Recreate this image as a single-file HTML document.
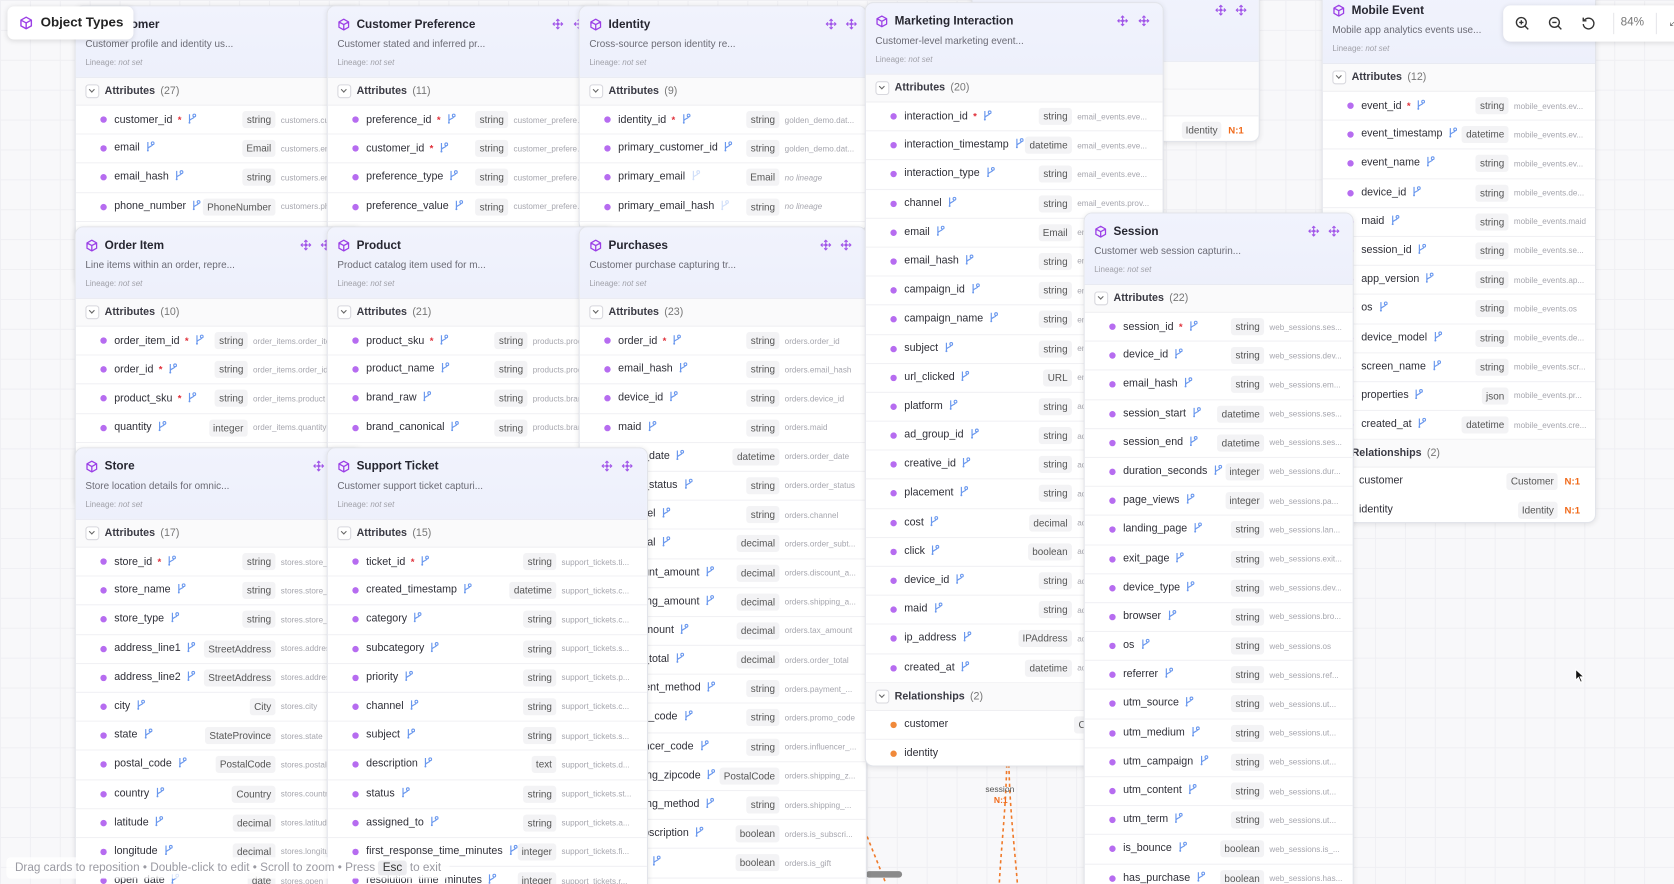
<!DOCTYPE html>
<html><head><meta charset="utf-8"><style>
html,body{margin:0;padding:0;width:1674px;height:884px;overflow:hidden;background:#f8f8fa;font-family:"Liberation Sans",sans-serif}
#w{position:absolute;left:0;top:0;width:1568px;height:828px;transform:scale(1.0676);transform-origin:0 0;overflow:hidden;
background-color:#f8f8fa;background-image:linear-gradient(#efeff3 1px,transparent 1px),linear-gradient(90deg,#efeff3 1px,transparent 1px);background-size:28px 28px}
.card{position:absolute;background:#fff;border:1px solid #e2e4ea;border-radius:8px;overflow:hidden;box-shadow:0 1px 5px rgba(0,0,0,.09)}
.hd{height:66px;background:linear-gradient(#f1f3fd,#edf0fb);position:relative;border-bottom:1px solid #e8eaf2}
.hd .ic{position:absolute;left:9px;top:11px;width:12px;height:12px}
.hd .t{position:absolute;left:27px;top:11px;font-size:11px;font-weight:bold;color:#262630}
.hd .d{position:absolute;left:9px;top:30px;font-size:9.3px;color:#6b6b75;white-space:nowrap}
.hd .l{position:absolute;left:9px;top:48px;font-size:7.5px;color:#a0a0a8}
.hd .mv{position:absolute;top:11px;width:11px;height:11px}
.ah{height:25px;background:#fafafb;border-bottom:1px solid #efeff2;position:relative;font-size:10px;font-weight:bold;color:#3a3a44;line-height:25px;padding-left:27px}
.ah span{font-weight:normal;color:#777;margin-left:5px}
.ah i{position:absolute;left:9px;top:6px;width:11px;height:11px;border:1px solid #d8d8de;border-radius:3px;background:#fff}
.ah i:after{content:"";position:absolute;left:3px;top:2px;width:3px;height:3px;border-right:1px solid #666;border-bottom:1px solid #666;transform:rotate(45deg)}
.r{height:27.2px;position:relative;border-bottom:1px solid #f1f1f4;box-sizing:border-box}
.dt{position:absolute;left:23px;top:10px;width:6px;height:6px;border-radius:50%;background:#b66cf0}
.o .dt{background:#f0893a}
.n{position:absolute;left:36px;top:0;line-height:26px;font-size:10px;color:#2f2f38;white-space:nowrap}
.n b{color:#e0303a;font-weight:bold;margin-left:5px;font-size:9px}
.k{width:9px;height:10px;margin-left:5px;vertical-align:-1px}
.rt{position:absolute;right:6px;top:0;height:26px;display:flex;align-items:center}
.rt em{font-style:normal;font-size:9.3px;color:#555;background:#f3f3f5;border-radius:3px;padding:3px 4px}
.rt small{display:block;width:70px;margin-left:5px;font-size:7.6px;color:#a6a6ae;white-space:nowrap;overflow:hidden;text-overflow:ellipsis}
.rt small.nl{font-style:italic}
.rt b{color:#f06a1a;font-size:9px;margin-left:6px;margin-right:8px}
.pf .rt{right:24px}
.oi .rt{right:22px}
.oi .rt small{width:80px}
.badge{position:absolute;left:7px;top:6px;width:118px;height:31px;background:#fff;border-radius:6px;box-shadow:0 1px 5px rgba(0,0,0,.12);z-index:50}
.zc{position:absolute;left:1408px;top:5px;width:170px;height:34px;background:#fff;border-radius:7px;box-shadow:0 1px 5px rgba(0,0,0,.12);z-index:50}
.hint{position:absolute;left:6px;top:803px;height:20px;padding:0 8px;line-height:20px;font-size:11px;color:#9a9aa2;background:rgba(255,255,255,.78);z-index:50;border-radius:4px}
.hint span{background:#ececef;color:#333;padding:1px 4px;border-radius:3px}
</style></head><body><div id="w">
<svg width="0" height="0" style="position:absolute">
<defs>
<symbol id="cube" viewBox="0 0 12 12"><path d="M6 1 L10.5 3.5 V8.5 L6 11 L1.5 8.5 V3.5 Z M1.5 3.5 L6 6 L10.5 3.5 M6 6 V11" fill="none" stroke="#9b3fe6" stroke-width="1.2" stroke-linejoin="round"/></symbol>
<symbol id="k" viewBox="0 0 9 10"><path d="M2.5 1 V9 M2.5 7.5 C2.5 5 7 5.5 7 3" fill="none" stroke="#6a98ee" stroke-width="1.1"/><circle cx="7" cy="2.2" r="1.3" fill="none" stroke="#6a98ee" stroke-width="1"/><circle cx="2.5" cy="9" r=".9" fill="#6a98ee"/></symbol>
<symbol id="mv" viewBox="0 0 11 11"><path d="M5.5 1 V10 M1 5.5 H10 M4 2.5 L5.5 1 L7 2.5 M4 8.5 L5.5 10 L7 8.5 M2.5 4 L1 5.5 L2.5 7 M8.5 4 L10 5.5 L8.5 7" fill="none" stroke="#a054e8" stroke-width="1"/><circle cx="5.5" cy="5.5" r="1.3" fill="#a054e8"/></symbol>
</defs></svg>

<svg style="position:absolute;left:0;top:0" width="1568" height="828">
<path d="M943 716 C942 760 938 790 936 828" stroke="#f07a2a" stroke-width="1.5" stroke-dasharray="3 3" fill="none"/>
<path d="M945 716 C946 760 950 790 953 828" stroke="#f07a2a" stroke-width="1.5" stroke-dasharray="3 3" fill="none"/>
<path d="M810 778 L830 828" stroke="#f07a2a" stroke-width="1.5" stroke-dasharray="3 3" fill="none"/>
<text x="923" y="742" font-size="8" fill="#555" font-family="Liberation Sans">session</text>
<text x="931" y="752" font-size="8" fill="#f06a1a" font-weight="bold" font-family="Liberation Sans">N:1</text>
<rect x="811" y="816" width="34" height="6" rx="3" fill="#8a8a8a"/>
</svg>

<!-- Customer -->
<div class="card" style="left:70px;top:5px;width:268px;height:260px">
<div class="hd"><svg class="ic"><use href="#cube"/></svg><div class="t">Customer</div><div class="d">Customer profile and identity us...</div><div class="l">Lineage: <i>not set</i></div></div>
<div class="ah"><i></i>Attributes<span>(27)</span></div>
<div class="r"><i class="dt"></i><span class="n">customer_id<b>*</b><svg class="k"><use href="#k"/></svg></span><span class="rt"><em>string</em><small>customers.customer_id</small></span></div>
<div class="r"><i class="dt"></i><span class="n">email<svg class="k"><use href="#k"/></svg></span><span class="rt"><em>Email</em><small>customers.email</small></span></div>
<div class="r"><i class="dt"></i><span class="n">email_hash<svg class="k"><use href="#k"/></svg></span><span class="rt"><em>string</em><small>customers.email_hash</small></span></div>
<div class="r"><i class="dt"></i><span class="n">phone_number<svg class="k"><use href="#k"/></svg></span><span class="rt"><em>PhoneNumber</em><small>customers.phone</small></span></div>
</div>

<!-- Customer Preference -->
<div class="card pf" style="left:306px;top:5px;width:268px;height:260px">
<div class="hd"><svg class="ic"><use href="#cube"/></svg><div class="t">Customer Preference</div><svg class="mv" style="left:210px"><use href="#mv"/></svg><svg class="mv" style="left:230px"><use href="#mv"/></svg><div class="d">Customer stated and inferred pr...</div><div class="l">Lineage: <i>not set</i></div></div>
<div class="ah"><i></i>Attributes<span>(11)</span></div>
<div class="r"><i class="dt"></i><span class="n">preference_id<b>*</b><svg class="k"><use href="#k"/></svg></span><span class="rt"><em>string</em><small>customer_preferences</small></span></div>
<div class="r"><i class="dt"></i><span class="n">customer_id<b>*</b><svg class="k"><use href="#k"/></svg></span><span class="rt"><em>string</em><small>customer_preferences</small></span></div>
<div class="r"><i class="dt"></i><span class="n">preference_type<svg class="k"><use href="#k"/></svg></span><span class="rt"><em>string</em><small>customer_preferences</small></span></div>
<div class="r"><i class="dt"></i><span class="n">preference_value<svg class="k"><use href="#k"/></svg></span><span class="rt"><em>string</em><small>customer_preferences</small></span></div>
</div>

<!-- Relationship card behind -->
<div class="card" style="left:910px;top:-10px;width:268px;height:141px">
<div class="hd"><svg class="mv" style="left:227px;top:13px"><use href="#mv"/></svg><svg class="mv" style="left:246px;top:13px"><use href="#mv"/></svg><div class="d" style="top:32px;left:120px">between an...</div></div>
<div class="ah"><i></i>Attributes<span>(0)</span></div>
<div class="ah" style="height:24px;line-height:24px">Relationships<span>(1)</span></div>
<div class="r o"><i class="dt"></i><span class="n">identity</span><span class="rt"><em>Identity</em><b>N:1</b></span></div>
</div>

<!-- Identity -->
<div class="card" style="left:542px;top:5px;width:268px;height:210px">
<div class="hd"><svg class="ic"><use href="#cube"/></svg><div class="t">Identity</div><svg class="mv" style="left:230px"><use href="#mv"/></svg><svg class="mv" style="left:249px"><use href="#mv"/></svg><div class="d">Cross-source person identity re...</div><div class="l">Lineage: <i>not set</i></div></div>
<div class="ah"><i></i>Attributes<span>(9)</span></div>
<div class="r"><i class="dt"></i><span class="n">identity_id<b>*</b><svg class="k"><use href="#k"/></svg></span><span class="rt"><em>string</em><small>golden_demo.dat...</small></span></div>
<div class="r"><i class="dt"></i><span class="n">primary_customer_id<svg class="k"><use href="#k"/></svg></span><span class="rt"><em>string</em><small>golden_demo.dat...</small></span></div>
<div class="r"><i class="dt"></i><span class="n">primary_email<svg class="k" style="opacity:.3"><use href="#k"/></svg></span><span class="rt"><em>Email</em><small class="nl">no lineage</small></span></div>
<div class="r"><i class="dt"></i><span class="n">primary_email_hash<svg class="k" style="opacity:.3"><use href="#k"/></svg></span><span class="rt"><em>string</em><small class="nl">no lineage</small></span></div>
</div>

<!-- Order Item -->
<div class="card oi" style="left:70px;top:212px;width:268px;height:260px">
<div class="hd"><svg class="ic"><use href="#cube"/></svg><div class="t">Order Item</div><svg class="mv" style="left:210px"><use href="#mv"/></svg><svg class="mv" style="left:229px"><use href="#mv"/></svg><div class="d">Line items within an order, repre...</div><div class="l">Lineage: <i>not set</i></div></div>
<div class="ah"><i></i>Attributes<span>(10)</span></div>
<div class="r"><i class="dt"></i><span class="n">order_item_id<b>*</b><svg class="k"><use href="#k"/></svg></span><span class="rt"><em>string</em><small>order_items.order_item_id</small></span></div>
<div class="r"><i class="dt"></i><span class="n">order_id<b>*</b><svg class="k"><use href="#k"/></svg></span><span class="rt"><em>string</em><small>order_items.order_id</small></span></div>
<div class="r"><i class="dt"></i><span class="n">product_sku<b>*</b><svg class="k"><use href="#k"/></svg></span><span class="rt"><em>string</em><small>order_items.product</small></span></div>
<div class="r"><i class="dt"></i><span class="n">quantity<svg class="k"><use href="#k"/></svg></span><span class="rt"><em>integer</em><small>order_items.quantity</small></span></div>
</div>

<!-- Product -->
<div class="card" style="left:306px;top:212px;width:268px;height:260px">
<div class="hd"><svg class="ic"><use href="#cube"/></svg><div class="t">Product</div><div class="d">Product catalog item used for m...</div><div class="l">Lineage: <i>not set</i></div></div>
<div class="ah"><i></i>Attributes<span>(21)</span></div>
<div class="r"><i class="dt"></i><span class="n">product_sku<b>*</b><svg class="k"><use href="#k"/></svg></span><span class="rt"><em>string</em><small>products.product_sku</small></span></div>
<div class="r"><i class="dt"></i><span class="n">product_name<svg class="k"><use href="#k"/></svg></span><span class="rt"><em>string</em><small>products.product_name</small></span></div>
<div class="r"><i class="dt"></i><span class="n">brand_raw<svg class="k"><use href="#k"/></svg></span><span class="rt"><em>string</em><small>products.brand_raw</small></span></div>
<div class="r"><i class="dt"></i><span class="n">brand_canonical<svg class="k"><use href="#k"/></svg></span><span class="rt"><em>string</em><small>products.brand</small></span></div>
</div>

<!-- Purchases -->
<div class="card" style="left:542px;top:212px;width:268px;height:640px">
<div class="hd"><svg class="ic"><use href="#cube"/></svg><div class="t">Purchases</div><svg class="mv" style="left:225px"><use href="#mv"/></svg><svg class="mv" style="left:244px"><use href="#mv"/></svg><div class="d">Customer purchase capturing tr...</div><div class="l">Lineage: <i>not set</i></div></div>
<div class="ah"><i></i>Attributes<span>(23)</span></div>
<div class="r"><i class="dt"></i><span class="n">order_id<b>*</b><svg class="k"><use href="#k"/></svg></span><span class="rt"><em>string</em><small>orders.order_id</small></span></div>
<div class="r"><i class="dt"></i><span class="n">email_hash<svg class="k"><use href="#k"/></svg></span><span class="rt"><em>string</em><small>orders.email_hash</small></span></div>
<div class="r"><i class="dt"></i><span class="n">device_id<svg class="k"><use href="#k"/></svg></span><span class="rt"><em>string</em><small>orders.device_id</small></span></div>
<div class="r"><i class="dt"></i><span class="n">maid<svg class="k"><use href="#k"/></svg></span><span class="rt"><em>string</em><small>orders.maid</small></span></div>
<div class="r"><i class="dt"></i><span class="n">order_date<svg class="k"><use href="#k"/></svg></span><span class="rt"><em>datetime</em><small>orders.order_date</small></span></div>
<div class="r"><i class="dt"></i><span class="n">order_status<svg class="k"><use href="#k"/></svg></span><span class="rt"><em>string</em><small>orders.order_status</small></span></div>
<div class="r"><i class="dt"></i><span class="n">channel<svg class="k"><use href="#k"/></svg></span><span class="rt"><em>string</em><small>orders.channel</small></span></div>
<div class="r"><i class="dt"></i><span class="n">subtotal<svg class="k"><use href="#k"/></svg></span><span class="rt"><em>decimal</em><small>orders.order_subt...</small></span></div>
<div class="r"><i class="dt"></i><span class="n">discount_amount<svg class="k"><use href="#k"/></svg></span><span class="rt"><em>decimal</em><small>orders.discount_a...</small></span></div>
<div class="r"><i class="dt"></i><span class="n">shipping_amount<svg class="k"><use href="#k"/></svg></span><span class="rt"><em>decimal</em><small>orders.shipping_a...</small></span></div>
<div class="r"><i class="dt"></i><span class="n">tax_amount<svg class="k"><use href="#k"/></svg></span><span class="rt"><em>decimal</em><small>orders.tax_amount</small></span></div>
<div class="r"><i class="dt"></i><span class="n">order_total<svg class="k"><use href="#k"/></svg></span><span class="rt"><em>decimal</em><small>orders.order_total</small></span></div>
<div class="r"><i class="dt"></i><span class="n">payment_method<svg class="k"><use href="#k"/></svg></span><span class="rt"><em>string</em><small>orders.payment_...</small></span></div>
<div class="r"><i class="dt"></i><span class="n">promo_code<svg class="k"><use href="#k"/></svg></span><span class="rt"><em>string</em><small>orders.promo_code</small></span></div>
<div class="r"><i class="dt"></i><span class="n">influencer_code<svg class="k"><use href="#k"/></svg></span><span class="rt"><em>string</em><small>orders.influencer_...</small></span></div>
<div class="r"><i class="dt"></i><span class="n">shipping_zipcode<svg class="k"><use href="#k"/></svg></span><span class="rt"><em>PostalCode</em><small>orders.shipping_z...</small></span></div>
<div class="r"><i class="dt"></i><span class="n">shipping_method<svg class="k"><use href="#k"/></svg></span><span class="rt"><em>string</em><small>orders.shipping_...</small></span></div>
<div class="r"><i class="dt"></i><span class="n">is_subscription<svg class="k"><use href="#k"/></svg></span><span class="rt"><em>boolean</em><small>orders.is_subscri...</small></span></div>
<div class="r"><i class="dt"></i><span class="n">is_gift<svg class="k"><use href="#k"/></svg></span><span class="rt"><em>boolean</em><small>orders.is_gift</small></span></div>
</div>

<!-- Store -->
<div class="card" style="left:70px;top:419px;width:268px;height:440px">
<div class="hd"><svg class="ic"><use href="#cube"/></svg><div class="t">Store</div><svg class="mv" style="left:222px"><use href="#mv"/></svg><div class="d">Store location details for omnic...</div><div class="l">Lineage: <i>not set</i></div></div>
<div class="ah"><i></i>Attributes<span>(17)</span></div>
<div class="r"><i class="dt"></i><span class="n">store_id<b>*</b><svg class="k"><use href="#k"/></svg></span><span class="rt"><em>string</em><small>stores.store_id</small></span></div>
<div class="r"><i class="dt"></i><span class="n">store_name<svg class="k"><use href="#k"/></svg></span><span class="rt"><em>string</em><small>stores.store_name</small></span></div>
<div class="r"><i class="dt"></i><span class="n">store_type<svg class="k"><use href="#k"/></svg></span><span class="rt"><em>string</em><small>stores.store_type</small></span></div>
<div class="r"><i class="dt"></i><span class="n">address_line1<svg class="k"><use href="#k"/></svg></span><span class="rt"><em>StreetAddress</em><small>stores.address</small></span></div>
<div class="r"><i class="dt"></i><span class="n">address_line2<svg class="k"><use href="#k"/></svg></span><span class="rt"><em>StreetAddress</em><small>stores.address</small></span></div>
<div class="r"><i class="dt"></i><span class="n">city<svg class="k"><use href="#k"/></svg></span><span class="rt"><em>City</em><small>stores.city</small></span></div>
<div class="r"><i class="dt"></i><span class="n">state<svg class="k"><use href="#k"/></svg></span><span class="rt"><em>StateProvince</em><small>stores.state</small></span></div>
<div class="r"><i class="dt"></i><span class="n">postal_code<svg class="k"><use href="#k"/></svg></span><span class="rt"><em>PostalCode</em><small>stores.postal_code</small></span></div>
<div class="r"><i class="dt"></i><span class="n">country<svg class="k"><use href="#k"/></svg></span><span class="rt"><em>Country</em><small>stores.country</small></span></div>
<div class="r"><i class="dt"></i><span class="n">latitude<svg class="k"><use href="#k"/></svg></span><span class="rt"><em>decimal</em><small>stores.latitude</small></span></div>
<div class="r"><i class="dt"></i><span class="n">longitude<svg class="k"><use href="#k"/></svg></span><span class="rt"><em>decimal</em><small>stores.longitude</small></span></div>
<div class="r"><i class="dt"></i><span class="n">open_date<svg class="k"><use href="#k"/></svg></span><span class="rt"><em>date</em><small>stores.open_date</small></span></div>
</div>

<!-- Support Ticket -->
<div class="card" style="left:306px;top:419px;width:299px;height:440px">
<div class="hd"><svg class="ic"><use href="#cube"/></svg><div class="t">Support Ticket</div><svg class="mv" style="left:256px"><use href="#mv"/></svg><svg class="mv" style="left:275px"><use href="#mv"/></svg><div class="d">Customer support ticket capturi...</div><div class="l">Lineage: <i>not set</i></div></div>
<div class="ah"><i></i>Attributes<span>(15)</span></div>
<div class="r"><i class="dt"></i><span class="n">ticket_id<b>*</b><svg class="k"><use href="#k"/></svg></span><span class="rt" style="right:10px"><em>string</em><small>support_tickets.ti...</small></span></div>
<div class="r"><i class="dt"></i><span class="n">created_timestamp<svg class="k"><use href="#k"/></svg></span><span class="rt" style="right:10px"><em>datetime</em><small>support_tickets.c...</small></span></div>
<div class="r"><i class="dt"></i><span class="n">category<svg class="k"><use href="#k"/></svg></span><span class="rt" style="right:10px"><em>string</em><small>support_tickets.c...</small></span></div>
<div class="r"><i class="dt"></i><span class="n">subcategory<svg class="k"><use href="#k"/></svg></span><span class="rt" style="right:10px"><em>string</em><small>support_tickets.s...</small></span></div>
<div class="r"><i class="dt"></i><span class="n">priority<svg class="k"><use href="#k"/></svg></span><span class="rt" style="right:10px"><em>string</em><small>support_tickets.p...</small></span></div>
<div class="r"><i class="dt"></i><span class="n">channel<svg class="k"><use href="#k"/></svg></span><span class="rt" style="right:10px"><em>string</em><small>support_tickets.c...</small></span></div>
<div class="r"><i class="dt"></i><span class="n">subject<svg class="k"><use href="#k"/></svg></span><span class="rt" style="right:10px"><em>string</em><small>support_tickets.s...</small></span></div>
<div class="r"><i class="dt"></i><span class="n">description<svg class="k"><use href="#k"/></svg></span><span class="rt" style="right:10px"><em>text</em><small>support_tickets.d...</small></span></div>
<div class="r"><i class="dt"></i><span class="n">status<svg class="k"><use href="#k"/></svg></span><span class="rt" style="right:10px"><em>string</em><small>support_tickets.st...</small></span></div>
<div class="r"><i class="dt"></i><span class="n">assigned_to<svg class="k"><use href="#k"/></svg></span><span class="rt" style="right:10px"><em>string</em><small>support_tickets.a...</small></span></div>
<div class="r"><i class="dt"></i><span class="n">first_response_time_minutes<svg class="k"><use href="#k"/></svg></span><span class="rt" style="right:10px"><em>integer</em><small>support_tickets.fi...</small></span></div>
<div class="r"><i class="dt"></i><span class="n">resolution_time_minutes<svg class="k"><use href="#k"/></svg></span><span class="rt" style="right:10px"><em>integer</em><small>support_tickets.r...</small></span></div>
</div>

<!-- Mobile Event -->
<div class="card" style="left:1238px;top:-8px;width:255px;height:496px">
<div class="hd"><svg class="ic"><use href="#cube"/></svg><div class="t">Mobile Event</div><div class="d">Mobile app analytics events use...</div><div class="l">Lineage: <i>not set</i></div></div>
<div class="ah"><i></i>Attributes<span>(12)</span></div>
<div class="r"><i class="dt"></i><span class="n">event_id<b>*</b><svg class="k"><use href="#k"/></svg></span><span class="rt"><em>string</em><small>mobile_events.ev...</small></span></div>
<div class="r"><i class="dt"></i><span class="n">event_timestamp<svg class="k"><use href="#k"/></svg></span><span class="rt"><em>datetime</em><small>mobile_events.ev...</small></span></div>
<div class="r"><i class="dt"></i><span class="n">event_name<svg class="k"><use href="#k"/></svg></span><span class="rt"><em>string</em><small>mobile_events.ev...</small></span></div>
<div class="r"><i class="dt"></i><span class="n">device_id<svg class="k"><use href="#k"/></svg></span><span class="rt"><em>string</em><small>mobile_events.de...</small></span></div>
<div class="r"><i class="dt"></i><span class="n">maid<svg class="k"><use href="#k"/></svg></span><span class="rt"><em>string</em><small>mobile_events.maid</small></span></div>
<div class="r"><i class="dt"></i><span class="n">session_id<svg class="k"><use href="#k"/></svg></span><span class="rt"><em>string</em><small>mobile_events.se...</small></span></div>
<div class="r"><i class="dt"></i><span class="n">app_version<svg class="k"><use href="#k"/></svg></span><span class="rt"><em>string</em><small>mobile_events.ap...</small></span></div>
<div class="r"><i class="dt"></i><span class="n">os<svg class="k"><use href="#k"/></svg></span><span class="rt"><em>string</em><small>mobile_events.os</small></span></div>
<div class="r"><i class="dt"></i><span class="n">device_model<svg class="k"><use href="#k"/></svg></span><span class="rt"><em>string</em><small>mobile_events.de...</small></span></div>
<div class="r"><i class="dt"></i><span class="n">screen_name<svg class="k"><use href="#k"/></svg></span><span class="rt"><em>string</em><small>mobile_events.scr...</small></span></div>
<div class="r"><i class="dt"></i><span class="n">properties<svg class="k"><use href="#k"/></svg></span><span class="rt"><em>json</em><small>mobile_events.pr...</small></span></div>
<div class="r"><i class="dt"></i><span class="n">created_at<svg class="k"><use href="#k"/></svg></span><span class="rt"><em>datetime</em><small>mobile_events.cre...</small></span></div>
<div class="ah" style="padding-left:27px">Relationships<span>(2)</span></div>
<div class="r" style="border:0"><span class="n" style="left:34px">customer</span><span class="rt"><em>Customer</em><b>N:1</b></span></div>
<div class="r" style="border:0"><span class="n" style="left:34px">identity</span><span class="rt"><em>Identity</em><b>N:1</b></span></div>
</div>

<!-- Marketing Interaction -->
<div class="card" style="left:810px;top:2px;width:278px;height:714px">
<div class="hd"><svg class="ic"><use href="#cube"/></svg><div class="t">Marketing Interaction</div><svg class="mv" style="left:235px"><use href="#mv"/></svg><svg class="mv" style="left:255px"><use href="#mv"/></svg><div class="d">Customer-level marketing event...</div><div class="l">Lineage: <i>not set</i></div></div>
<div class="ah"><i></i>Attributes<span>(20)</span></div>
<div class="r"><i class="dt"></i><span class="n">interaction_id<b>*</b><svg class="k"><use href="#k"/></svg></span><span class="rt" style="right:10px"><em>string</em><small>email_events.eve...</small></span></div>
<div class="r"><i class="dt"></i><span class="n">interaction_timestamp<svg class="k"><use href="#k"/></svg></span><span class="rt" style="right:10px"><em>datetime</em><small>email_events.eve...</small></span></div>
<div class="r"><i class="dt"></i><span class="n">interaction_type<svg class="k"><use href="#k"/></svg></span><span class="rt" style="right:10px"><em>string</em><small>email_events.eve...</small></span></div>
<div class="r"><i class="dt"></i><span class="n">channel<svg class="k"><use href="#k"/></svg></span><span class="rt" style="right:10px"><em>string</em><small>email_events.prov...</small></span></div>
<div class="r"><i class="dt"></i><span class="n">email<svg class="k"><use href="#k"/></svg></span><span class="rt" style="right:10px"><em>Email</em><small>email_events.em...</small></span></div>
<div class="r"><i class="dt"></i><span class="n">email_hash<svg class="k"><use href="#k"/></svg></span><span class="rt" style="right:10px"><em>string</em><small>email_events.em...</small></span></div>
<div class="r"><i class="dt"></i><span class="n">campaign_id<svg class="k"><use href="#k"/></svg></span><span class="rt" style="right:10px"><em>string</em><small>email_events.ca...</small></span></div>
<div class="r"><i class="dt"></i><span class="n">campaign_name<svg class="k"><use href="#k"/></svg></span><span class="rt" style="right:10px"><em>string</em><small>email_events.ca...</small></span></div>
<div class="r"><i class="dt"></i><span class="n">subject<svg class="k"><use href="#k"/></svg></span><span class="rt" style="right:10px"><em>string</em><small>email_events.su...</small></span></div>
<div class="r"><i class="dt"></i><span class="n">url_clicked<svg class="k"><use href="#k"/></svg></span><span class="rt" style="right:10px"><em>URL</em><small>email_events.url...</small></span></div>
<div class="r"><i class="dt"></i><span class="n">platform<svg class="k"><use href="#k"/></svg></span><span class="rt" style="right:10px"><em>string</em><small>ad_events.pl...</small></span></div>
<div class="r"><i class="dt"></i><span class="n">ad_group_id<svg class="k"><use href="#k"/></svg></span><span class="rt" style="right:10px"><em>string</em><small>ad_events.ad...</small></span></div>
<div class="r"><i class="dt"></i><span class="n">creative_id<svg class="k"><use href="#k"/></svg></span><span class="rt" style="right:10px"><em>string</em><small>ad_events.cr...</small></span></div>
<div class="r"><i class="dt"></i><span class="n">placement<svg class="k"><use href="#k"/></svg></span><span class="rt" style="right:10px"><em>string</em><small>ad_events.pl...</small></span></div>
<div class="r"><i class="dt"></i><span class="n">cost<svg class="k"><use href="#k"/></svg></span><span class="rt" style="right:10px"><em>decimal</em><small>ad_events.cost</small></span></div>
<div class="r"><i class="dt"></i><span class="n">click<svg class="k"><use href="#k"/></svg></span><span class="rt" style="right:10px"><em>boolean</em><small>ad_events.click</small></span></div>
<div class="r"><i class="dt"></i><span class="n">device_id<svg class="k"><use href="#k"/></svg></span><span class="rt" style="right:10px"><em>string</em><small>ad_events.de...</small></span></div>
<div class="r"><i class="dt"></i><span class="n">maid<svg class="k"><use href="#k"/></svg></span><span class="rt" style="right:10px"><em>string</em><small>ad_events.maid</small></span></div>
<div class="r"><i class="dt"></i><span class="n">ip_address<svg class="k"><use href="#k"/></svg></span><span class="rt" style="right:10px"><em>IPAddress</em><small>ad_events.ip...</small></span></div>
<div class="r"><i class="dt"></i><span class="n">created_at<svg class="k"><use href="#k"/></svg></span><span class="rt" style="right:10px"><em>datetime</em><small>ad_events.cr...</small></span></div>
<div class="ah"><i></i>Relationships<span>(2)</span></div>
<div class="r o"><i class="dt"></i><span class="n">customer</span><span class="rt"><em>Customer</em><b>N:1</b></span></div>
<div class="r o" style="border:0"><i class="dt"></i><span class="n">identity</span><span class="rt"><em>Identity</em><b>N:1</b></span></div>
</div>

<!-- Session -->
<div class="card" style="left:1015px;top:199px;width:251px;height:660px">
<div class="hd"><svg class="ic"><use href="#cube"/></svg><div class="t">Session</div><svg class="mv" style="left:209px"><use href="#mv"/></svg><svg class="mv" style="left:228px"><use href="#mv"/></svg><div class="d">Customer web session capturin...</div><div class="l">Lineage: <i>not set</i></div></div>
<div class="ah"><i></i>Attributes<span>(22)</span></div>
<div class="r"><i class="dt"></i><span class="n">session_id<b>*</b><svg class="k"><use href="#k"/></svg></span><span class="rt" style="right:8px"><em>string</em><small>web_sessions.ses...</small></span></div>
<div class="r"><i class="dt"></i><span class="n">device_id<svg class="k"><use href="#k"/></svg></span><span class="rt" style="right:8px"><em>string</em><small>web_sessions.dev...</small></span></div>
<div class="r"><i class="dt"></i><span class="n">email_hash<svg class="k"><use href="#k"/></svg></span><span class="rt" style="right:8px"><em>string</em><small>web_sessions.em...</small></span></div>
<div class="r"><i class="dt"></i><span class="n">session_start<svg class="k"><use href="#k"/></svg></span><span class="rt" style="right:8px"><em>datetime</em><small>web_sessions.ses...</small></span></div>
<div class="r"><i class="dt"></i><span class="n">session_end<svg class="k"><use href="#k"/></svg></span><span class="rt" style="right:8px"><em>datetime</em><small>web_sessions.ses...</small></span></div>
<div class="r"><i class="dt"></i><span class="n">duration_seconds<svg class="k"><use href="#k"/></svg></span><span class="rt" style="right:8px"><em>integer</em><small>web_sessions.dur...</small></span></div>
<div class="r"><i class="dt"></i><span class="n">page_views<svg class="k"><use href="#k"/></svg></span><span class="rt" style="right:8px"><em>integer</em><small>web_sessions.pa...</small></span></div>
<div class="r"><i class="dt"></i><span class="n">landing_page<svg class="k"><use href="#k"/></svg></span><span class="rt" style="right:8px"><em>string</em><small>web_sessions.lan...</small></span></div>
<div class="r"><i class="dt"></i><span class="n">exit_page<svg class="k"><use href="#k"/></svg></span><span class="rt" style="right:8px"><em>string</em><small>web_sessions.exit...</small></span></div>
<div class="r"><i class="dt"></i><span class="n">device_type<svg class="k"><use href="#k"/></svg></span><span class="rt" style="right:8px"><em>string</em><small>web_sessions.dev...</small></span></div>
<div class="r"><i class="dt"></i><span class="n">browser<svg class="k"><use href="#k"/></svg></span><span class="rt" style="right:8px"><em>string</em><small>web_sessions.bro...</small></span></div>
<div class="r"><i class="dt"></i><span class="n">os<svg class="k"><use href="#k"/></svg></span><span class="rt" style="right:8px"><em>string</em><small>web_sessions.os</small></span></div>
<div class="r"><i class="dt"></i><span class="n">referrer<svg class="k"><use href="#k"/></svg></span><span class="rt" style="right:8px"><em>string</em><small>web_sessions.ref...</small></span></div>
<div class="r"><i class="dt"></i><span class="n">utm_source<svg class="k"><use href="#k"/></svg></span><span class="rt" style="right:8px"><em>string</em><small>web_sessions.ut...</small></span></div>
<div class="r"><i class="dt"></i><span class="n">utm_medium<svg class="k"><use href="#k"/></svg></span><span class="rt" style="right:8px"><em>string</em><small>web_sessions.ut...</small></span></div>
<div class="r"><i class="dt"></i><span class="n">utm_campaign<svg class="k"><use href="#k"/></svg></span><span class="rt" style="right:8px"><em>string</em><small>web_sessions.ut...</small></span></div>
<div class="r"><i class="dt"></i><span class="n">utm_content<svg class="k"><use href="#k"/></svg></span><span class="rt" style="right:8px"><em>string</em><small>web_sessions.ut...</small></span></div>
<div class="r"><i class="dt"></i><span class="n">utm_term<svg class="k"><use href="#k"/></svg></span><span class="rt" style="right:8px"><em>string</em><small>web_sessions.ut...</small></span></div>
<div class="r"><i class="dt"></i><span class="n">is_bounce<svg class="k"><use href="#k"/></svg></span><span class="rt" style="right:8px"><em>boolean</em><small>web_sessions.is_...</small></span></div>
<div class="r"><i class="dt"></i><span class="n">has_purchase<svg class="k"><use href="#k"/></svg></span><span class="rt" style="right:8px"><em>boolean</em><small>web_sessions.has...</small></span></div>
</div>

<!-- Overlays -->
<div class="badge"><svg style="position:absolute;left:11px;top:9px;width:13px;height:13px"><use href="#cube"/></svg><span style="position:absolute;left:31px;top:8px;font-size:12.5px;font-weight:bold;color:#222">Object Types</span></div>
<div class="zc">
<svg style="position:absolute;left:11px;top:10px" width="14" height="14" viewBox="0 0 14 14"><circle cx="6" cy="6" r="4.6" fill="none" stroke="#333" stroke-width="1.3"/><path d="M9.4 9.4 L12.5 12.5 M4 6 H8 M6 4 V8" stroke="#333" stroke-width="1.3"/></svg>
<svg style="position:absolute;left:42px;top:10px" width="14" height="14" viewBox="0 0 14 14"><circle cx="6" cy="6" r="4.6" fill="none" stroke="#333" stroke-width="1.3"/><path d="M9.4 9.4 L12.5 12.5 M4 6 H8" stroke="#333" stroke-width="1.3"/></svg>
<svg style="position:absolute;left:73px;top:10px" width="14" height="14" viewBox="0 0 14 14"><path d="M3 4 A5 5 0 1 1 2 7.5" fill="none" stroke="#333" stroke-width="1.3"/><path d="M2 1.5 V4.5 H5" fill="none" stroke="#333" stroke-width="1.3"/></svg>
<div style="position:absolute;left:103px;top:7px;width:1px;height:20px;background:#e6e6ea"></div>
<span style="position:absolute;left:110px;top:10px;font-size:11px;color:#777">84%</span>
<div style="position:absolute;left:143px;top:7px;width:1px;height:20px;background:#e6e6ea"></div>
<span style="position:absolute;left:156px;top:10px;font-size:11px;color:#555">⤢</span>
</div>
<div class="hint">Drag cards to reposition • Double-click to edit • Scroll to zoom • Press <span>Esc</span> to exit</div>
<svg style="position:absolute;left:1475px;top:626px;z-index:60" width="10" height="14" viewBox="0 0 10 14"><path d="M1 1 L1 11 L3.5 8.5 L5.5 13 L7 12.3 L5 8 L8.5 8 Z" fill="#111" stroke="#fff" stroke-width=".8"/></svg>
</div></body></html>
